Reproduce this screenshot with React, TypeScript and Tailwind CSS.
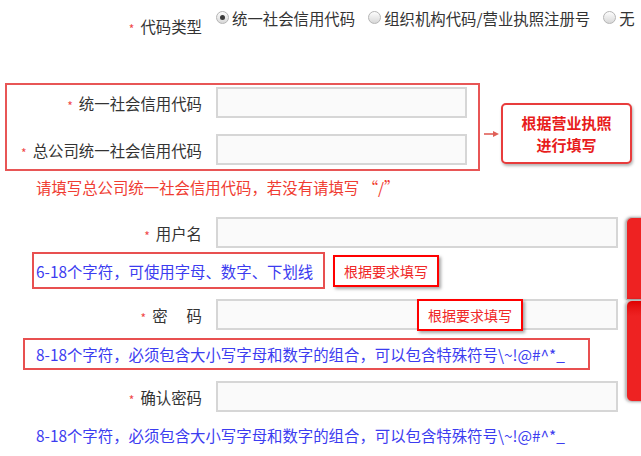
import type { ReactNode } from 'react';

function Star() {
  return <span className="relative top-[3px] mr-[6px] text-[12px] leading-[12px] text-[#f04848]">*</span>;
}

function Label({ children, width = 202 }: { children: ReactNode; width?: number }) {
  return (
    <div className="flex shrink-0 items-center justify-end" style={{ width }}>
      <Star />
      <span>{children}</span>
    </div>
  );
}

function Input({ wide = true }: { wide?: boolean }) {
  return (
    <div
      className={`h-[31px] shrink-0 border-2 border-[#d6d6d6] bg-[#fafafa] ${wide ? 'w-[402px]' : 'w-[251px]'}`}
    />
  );
}

function Radio({ checked, label }: { checked?: boolean; label: string }) {
  return (
    <div className="flex items-start">
      <span className="mt-[4px] flex h-[13px] w-[13px] shrink-0 items-center justify-center rounded-full border border-[#b5b5b5] bg-gradient-to-b from-[#fdfdfd] to-[#d8d8d8]">
        {checked && <span className="h-[5px] w-[5px] rounded-full bg-[#3a3a3a]" />}
      </span>
      <span className="ml-[3px]">{label}</span>
    </div>
  );
}

function Tip({ children }: { children: ReactNode }) {
  return (
    <div className="flex h-[32px] w-[106px] shrink-0 items-center justify-center border-2 border-[#ff0000] bg-white text-[14px] text-[#f02828] shadow-[2px_2px_3px_rgba(0,0,0,0.35)]">
      {children}
    </div>
  );
}

export default function App() {
  return (
    <div className="relative h-[456px] w-[641px] overflow-hidden bg-white font-['Noto_Sans_CJK_SC','Noto_Sans',sans-serif] text-[15.4px] leading-[22px] text-[#333]">
      {/* 代码类型 */}
      <div className="flex h-[83px] items-start pt-[7px]">
        <div className="pt-[8px]">
          <Label>代码类型</Label>
        </div>
        <div className="ml-[14px] flex gap-[13px]">
          <Radio checked label="统一社会信用代码" />
          <Radio label="组织机构代码/营业执照注册号" />
          <Radio label="无" />
        </div>
      </div>

      {/* 信用代码 */}
      <div className="flex items-start">
        <div className="ml-[5px] flex h-[88px] w-[475px] shrink-0 flex-col gap-[16px] border-2 border-[#e85656] pt-[2px]">
          <div className="flex items-center">
            <Label width={195}>统一社会信用代码</Label>
            <div className="ml-[14px]">
              <Input wide={false} />
            </div>
          </div>
          <div className="flex items-center">
            <Label width={195}>总公司统一社会信用代码</Label>
            <div className="ml-[14px]">
              <Input wide={false} />
            </div>
          </div>
        </div>
        <div className="ml-[4px] mt-[20px] flex items-center">
          <svg width="15" height="8" viewBox="0 0 15 8">
            <line x1="0" y1="4" x2="11" y2="4" stroke="#e06058" strokeWidth="1.6" />
            <path d="M9 1 L15 4 L9 7 Z" fill="#e06058" />
          </svg>
          <div className="ml-[2px] flex h-[61px] w-[131px] flex-col items-center justify-center rounded-[5px] border-2 border-[#e83c3c] bg-white text-[15px] font-bold leading-[22px] text-[#e81c1c] shadow-[1px_2px_3px_rgba(0,0,0,0.3)]">
            <span>根据营业执照</span>
            <span>进行填写</span>
          </div>
        </div>
      </div>
      <div className="h-[33px] pl-[36px] leading-[33px] text-[#f03c32]">
        请填写总公司统一社会信用代码，若没有请填写 “/”
      </div>

      {/* 用户名 */}
      <div className="mt-[13px] flex items-center">
        <Label>用户名</Label>
        <div className="ml-[14px]">
          <Input />
        </div>
      </div>
      <div className="ml-[32px] mt-[4px] flex items-center gap-[8px]">
        <div className="flex h-[37px] w-[293px] items-center border-2 border-[#e85050] pl-[2px] text-[#3c3cf0]">
          6-18个字符，可使用字母、数字、下划线
        </div>
        <Tip>根据要求填写</Tip>
      </div>

      {/* 密码 */}
      <div className="relative mt-[10px] flex items-center">
        <Label>
          密<span className="inline-block w-[19px]" />码
        </Label>
        <div className="ml-[14px]">
          <Input />
        </div>
        <div className="absolute left-[417px] top-0">
          <Tip>根据要求填写</Tip>
        </div>
      </div>
      <div className="ml-[23px] mt-[8px] flex h-[32px] w-[567px] items-center border-2 border-[#e85050] pl-[11px] text-[#3c3cf0]">
        8-18个字符，必须包含大小写字母和数字的组合，可以包含特殊符号\~!@#^*_
      </div>

      {/* 确认密码 */}
      <div className="mt-[11px] flex items-center">
        <Label>确认密码</Label>
        <div className="ml-[14px]">
          <Input />
        </div>
      </div>
      <div className="mt-[12px] pl-[36px] text-[#3c3cf0]">
        8-18个字符，必须包含大小写字母和数字的组合，可以包含特殊符号\~!@#^*_
      </div>

      {/* 右侧浮动按钮 */}
      <div className="absolute left-[626px] top-[217px] flex w-[20px] flex-col">
        <div className="h-[83px] rounded-tl-[6px] border border-[#bdbdbd] bg-[#ee2222] shadow-[-1px_0_3px_rgba(0,0,0,0.35)]" />
        <div className="h-[102px] rounded-l-[6px] border border-[#bdbdbd] bg-gradient-to-b from-[#e00000] to-[#ee2222] to-[15%] shadow-[-1px_0_3px_rgba(0,0,0,0.35)]" />
      </div>
    </div>
  );
}
